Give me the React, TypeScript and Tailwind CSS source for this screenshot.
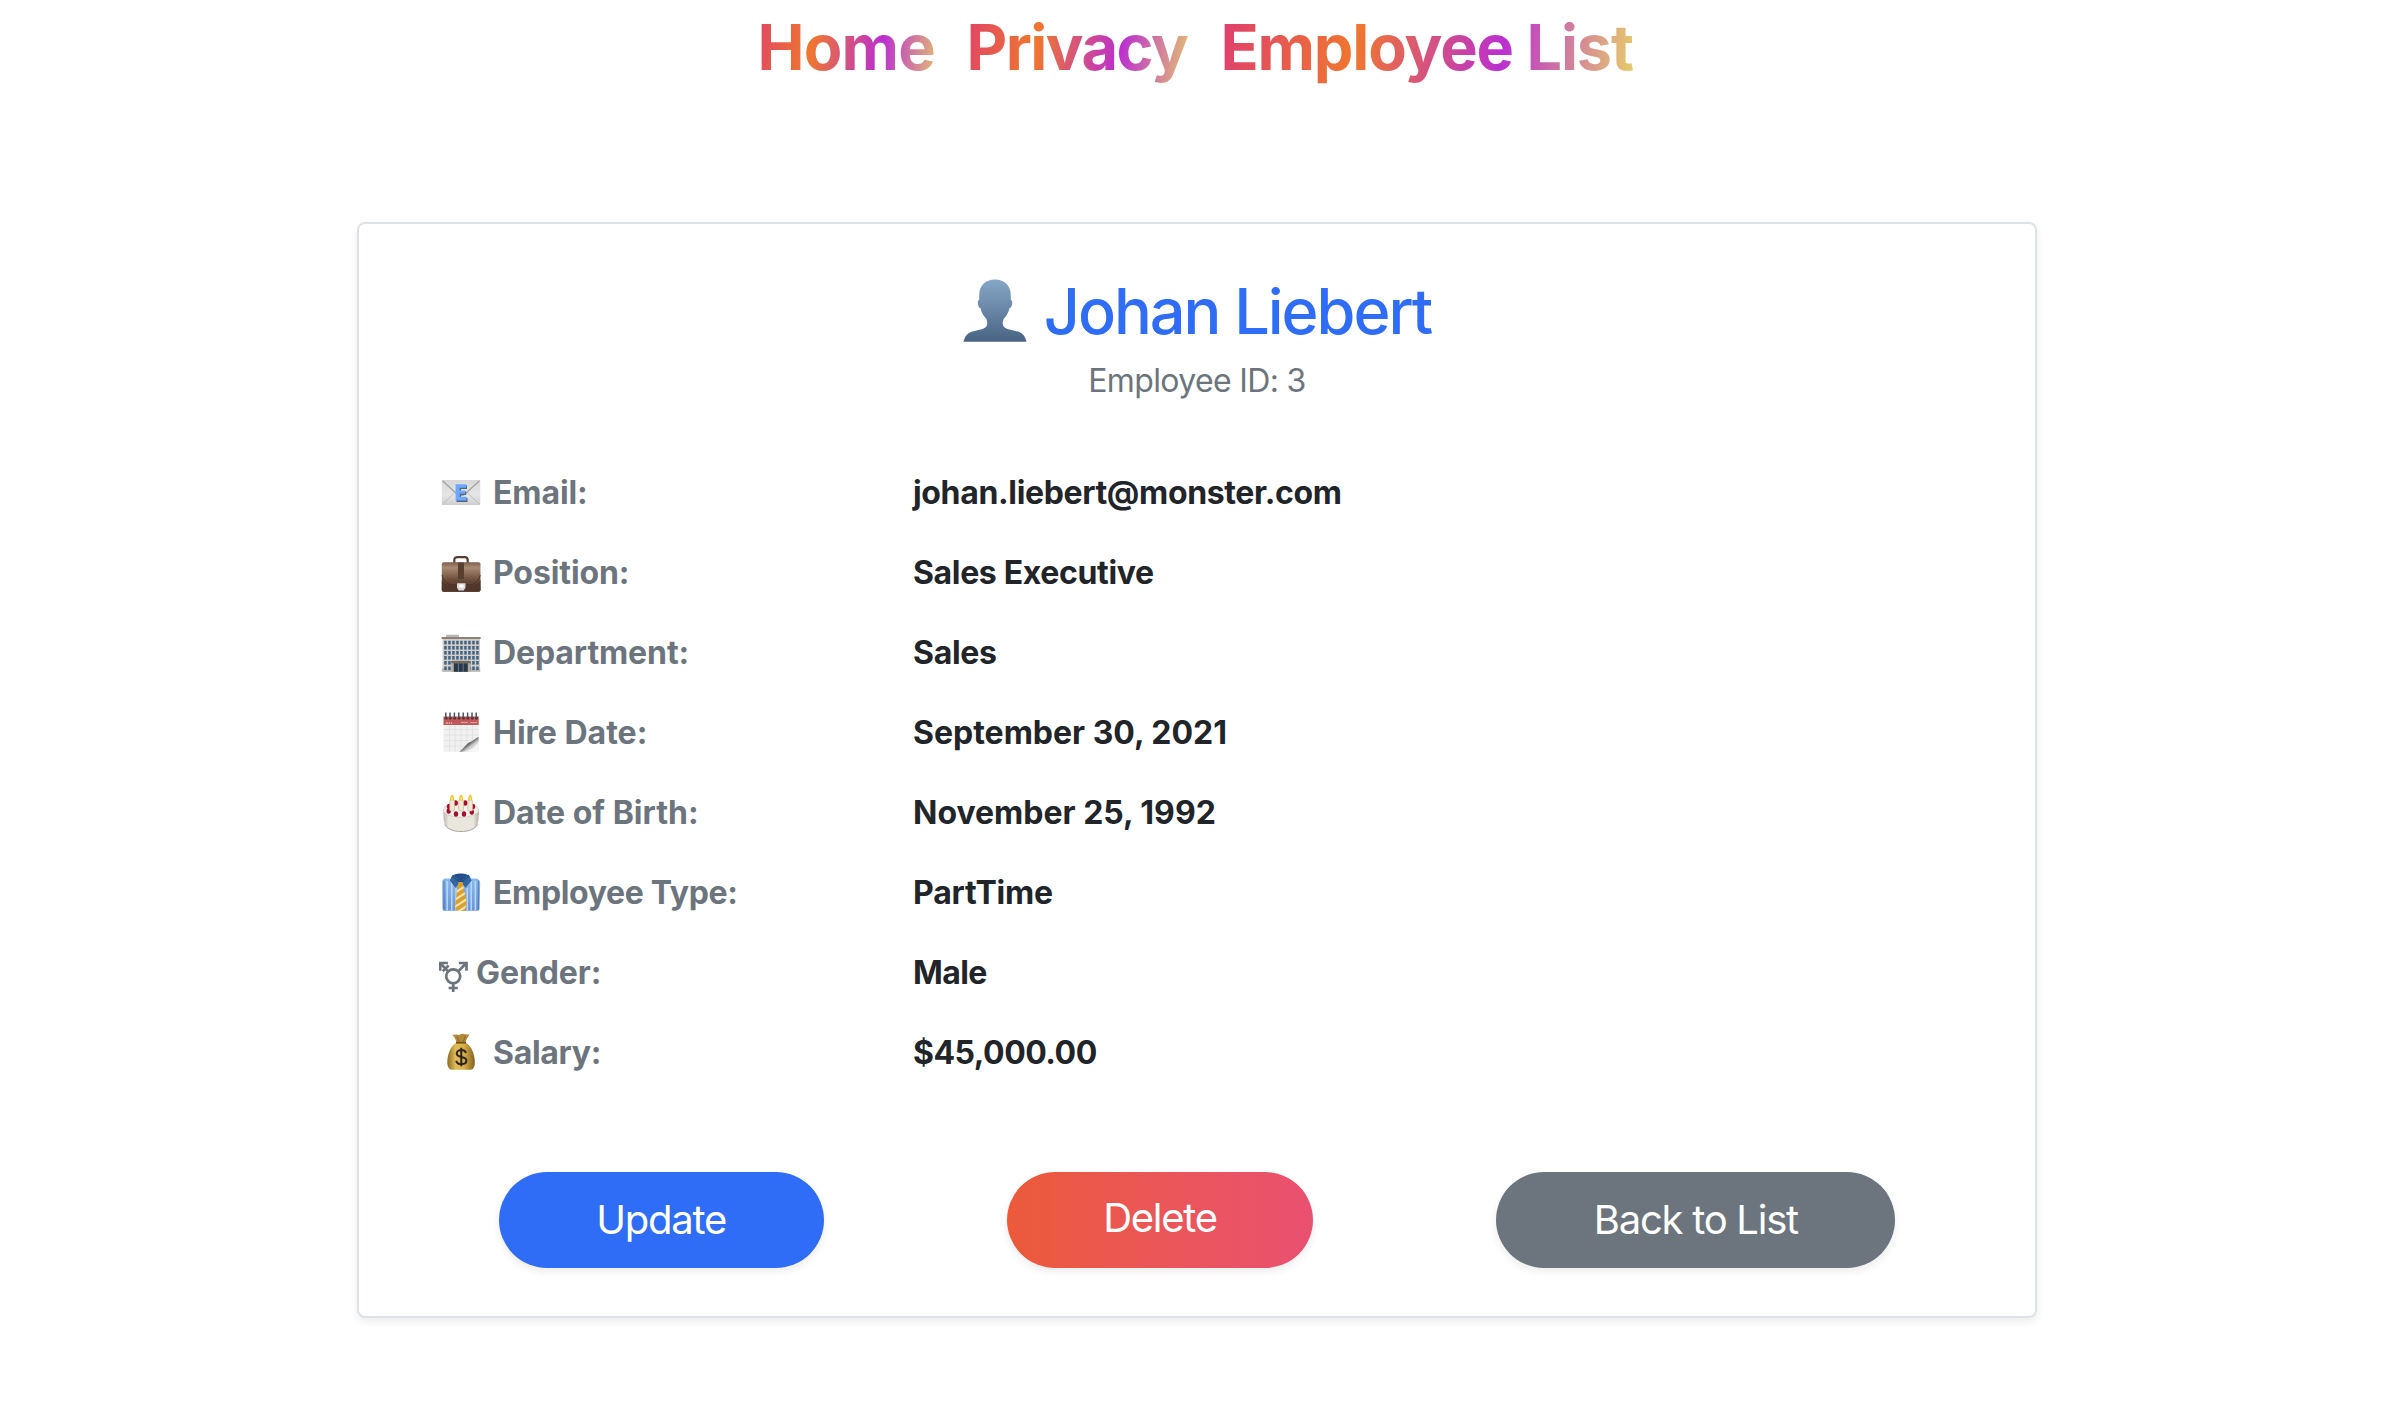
import type { ReactNode } from "react";

const svgBox = "block h-10 w-10 shrink-0 overflow-visible";

function PersonIcon() {
  return (
    <svg viewBox="0 0 64 63" className="relative -top-px block h-[63px] w-16 shrink-0">
      <defs>
        <linearGradient id="person" x1="0" y1="0" x2="0" y2="1">
          <stop offset="0" stopColor="#86a7c6" />
          <stop offset="0.5" stopColor="#6885a6" />
          <stop offset="1" stopColor="#496482" />
        </linearGradient>
      </defs>
      <path
        d="M32 .5C22 .5 16.200 7 16.200 16.500V21c-1.600.5-1.700 3-1 5.300.5 1.700 1.200 2.700 2.300 3 1 4.700 3.300 8 5.800 10.500 1.200 2.700 1.200 5 .4 7.200-1.500 2.600-4.700 3.200-9.200 4.300C6.500 53 2.500 54.500.5 62.700h63c-2-8.200-6-9.700-14-11.400-4.500-1.100-7.700-1.700-9.200-4.300-.8-2.200-.8-4.500.4-7.200 2.500-2.500 4.800-5.800 5.800-10.500 1.100-.3 1.800-1.300 2.300-3 .7-2.300.6-4.800-1-5.300v-4.500C47.800 7 42 .5 32 .5Z"
        fill="url(#person)"
      />
    </svg>
  );
}

function EmailIcon() {
  return (
    <svg viewBox="0 0 40 40" className={svgBox}>
      <defs>
        <linearGradient id="mail" x1="0" y1="0" x2="0" y2="1">
          <stop offset="0" stopColor="#d8d8d8" />
          <stop offset="0.6" stopColor="#e6e6e6" />
          <stop offset="1" stopColor="#cecece" />
        </linearGradient>
      </defs>
      <rect x="0.800" y="8" width="38.500" height="25" rx="0.800" fill="url(#mail)" />
      <path d="M1 32.600 14.500 20M39 32.600 25.500 20" stroke="#bdbdbd" strokeWidth="0.900" />
      <path d="M1.500 8.800 16 22c2.500 2 5.500 2 8 0L38.500 8.800" fill="none" stroke="#a3a3a3" strokeWidth="1.300" />
      <path d="M15.500 13.300h10.500v3.600h-6v2.600h5.200v3.400h-5.200v3h6.500v4H15.500Z" fill="#51647f" />
      <path d="M14.600 12.200h10.600v3.600h-6.500v2.600h5.500v3.400h-5.500v3h6.800v3.800H14.600Z" fill="#6ea8fb" />
    </svg>
  );
}

function BriefcaseIcon() {
  return (
    <svg viewBox="0 0 40 40" className={svgBox}>
      <defs>
        <linearGradient id="case" x1="0" y1="0" x2="0" y2="1">
          <stop offset="0" stopColor="#7d5f4c" />
          <stop offset="0.18" stopColor="#a68a72" />
          <stop offset="0.6" stopColor="#6b4c3b" />
          <stop offset="1" stopColor="#4a3026" />
        </linearGradient>
      </defs>
      <path d="M13.300 11V7.800c0-1.700 1.400-2.700 3-2.700h7.400c1.600 0 3 1 3 2.700V11" fill="none" stroke="#5a3d2f" strokeWidth="2.200" />
      <rect x="0.800" y="10.300" width="38.700" height="29.500" rx="2" fill="url(#case)" />
      <path d="M.8 28v10a1.800 1.800 0 0 0 1.800 1.800h35a1.800 1.800 0 0 0 1.900-1.800V28c-3 5-8 6-12.500 6H13.500C8 34 3.500 32.500.8 28Z" fill="#51362a" />
      <path d="M1 23c2 8 7 10 12.500 10H27c5.500 0 10.500-2.500 12.300-10" fill="none" stroke="#3d261d" strokeWidth="0.700" />
      <rect x="17" y="10.500" width="6" height="16.500" fill="#58402f" />
      <path d="M16 31.300h8.500v4.200l-1.700 3h-5.100l-1.700-3Z" fill="#dcdad8" />
      <path d="M18 32.500h4.500v3H18Z" fill="#fff" />
    </svg>
  );
}

function BuildingIcon() {
  const columns = [3.2, 7.200, 11.200, 15.200, 19.200, 23.200, 27.200, 31.200, 35.200];
  const rows = [8.800, 14, 19, 24, 29, 34.500];
  return (
    <svg viewBox="0 0 40 40" className={svgBox}>
      <rect x="5" y="2.700" width="13" height="3" fill="#b9b5b0" />
      <rect x="1.500" y="6" width="37.500" height="33.800" fill="#d3cdc3" />
      <rect x="0.600" y="5" width="39" height="2" fill="#8b8178" />
      <rect x="0.800" y="36.500" width="38.500" height="3.300" fill="#b7b3ad" fillOpacity="0.700" />
      {rows.map((y) =>
        columns.map((x) => <rect key={`${x}-${y}`} x={x} y={y} width="2.500" height="3.600" fill="#3d6388" />),
      )}
      <rect x="10.300" y="29.500" width="19" height="10.300" fill="#b4aca3" />
      <rect x="10.300" y="28.800" width="19" height="2.500" fill="#75695f" />
      <rect x="12.800" y="31.300" width="14" height="8.500" fill="#26384a" />
      <path d="M17.400 31.300v8.500M22.200 31.300v8.500" stroke="#8797a5" strokeWidth="0.700" />
    </svg>
  );
}

function CalendarIcon() {
  return (
    <svg viewBox="0 0 40 40" className={svgBox}>
      <defs>
        <linearGradient id="curl" x1="0" y1="0" x2="1" y2="1">
          <stop offset="0.250" stopColor="#f4f4f4" />
          <stop offset="0.450" stopColor="#555" />
          <stop offset="0.620" stopColor="#cfcfcf" />
          <stop offset="1" stopColor="#fff" />
        </linearGradient>
      </defs>
      <rect x="2.500" y="4" width="35.200" height="35.800" rx="0.800" fill="#f0f0f0" />
      <path d="M3 17.500h34.500M3 23h34.500M3 28.500h34.500M3 34h34.500M8.500 13v26.500M14.200 13v26.500M20 13v26.500M25.800 13v26.500M31.500 13v26.500" stroke="#e0e0e0" strokeWidth="0.800" />
      <path d="M2.500 4.500h35.200V13H2.500Z" fill="#c05a58" />
      <path d="M5 12l1-2 1 2m1.500 0v-2m2 0v2M20 10.500h7M29 10.500h7" fill="none" stroke="#e5aaa8" strokeWidth="0.900" />
      <path d="M37.700 25c-4 1.500-5 4-10 5.800-2 .8-4 5-9.500 9h19.500Z" fill="url(#curl)" />
      <path d="M37.700 30c-4 6-8 8-14 9.800h14Z" fill="#f6f6f6" />
      {[4.800, 9, 13.400, 17.800, 22.200, 26.600, 31, 35.200].map((x) => (
        <g key={x}>
          <circle cx={x + 0.300} cy="6.200" r="1.400" fill="#54292c" />
          <path d={`M${x} .5v5.700`} stroke="#4c535e" strokeWidth="1.500" />
        </g>
      ))}
    </svg>
  );
}

function CakeIcon() {
  const cherries: [number, number][] = [
    [8, 14.500], [14.700, 11], [24.300, 11], [32, 14.500], [7.700, 19], [15, 22], [23, 22], [30.800, 20],
  ];
  return (
    <svg viewBox="0 0 40 40" className={svgBox}>
      <defs>
        <linearGradient id="cake" x1="0" y1="0" x2="1" y2="0">
          <stop offset="0" stopColor="#bdb9ae" />
          <stop offset="0.150" stopColor="#e9e6de" />
          <stop offset="0.850" stopColor="#e9e6de" />
          <stop offset="1" stopColor="#b3afa3" />
        </linearGradient>
      </defs>
      <path d="M2.300 18c0 5-.1 10 1.500 14.500C6.500 37.500 13 39.700 20 39.700s13.800-2.200 16.500-7.200C37.900 28 37.800 23 37.800 18Z" fill="url(#cake)" />
      <path d="M3.800 32.500C6.500 37.500 13 39.500 20 39.500s13.800-2 16.500-7" fill="none" stroke="#a19d8f" strokeWidth="0.900" />
      <ellipse cx="20" cy="18" rx="17.700" ry="7.300" fill="#f3f1ea" stroke="#c5c1b5" strokeWidth="0.700" />
      {cherries.map(([x, y]) => (
        <ellipse key={`${x}-${y}`} cx={x} cy={y} rx="2.200" ry="2.700" fill="#a80d30" />
      ))}
      {[8.700, 17.700, 26.800].map((x) => (
        <g key={x}>
          <rect x={x} y="8" width="4.800" height="11" rx="1.300" fill="#efe9d2" stroke="#bbb497" strokeWidth="0.600" />
          <path d={`M${x + 2.400} 2.300c2.800 3 3 6.500 0 6.500s-2.800-3.500 0-6.500Z`} fill="#efc534" />
          <path d={`M${x + 2.400} 5v3.500`} stroke="#fff0a0" strokeWidth="1" />
        </g>
      ))}
    </svg>
  );
}

function ShirtIcon() {
  return (
    <svg viewBox="0 0 40 40" className={svgBox}>
      <defs>
        <clipPath id="tie">
          <path d="M17.500 10h4l1 4.500 3 15.500-1.500 9h-8l-2-4L16.700 14.500Z" />
        </clipPath>
        <linearGradient id="shirt" x1="0" y1="0" x2="0" y2="1">
          <stop offset="0" stopColor="#8bb9ec" />
          <stop offset="1" stopColor="#6996d6" />
        </linearGradient>
      </defs>
      <path d="M4 6.500h31c3 .4 4 2 4.200 4.500L38.500 37c0 1-.8 1.800-2 1.800h-33c-1.300 0-2-.8-2-1.800L1.200 11C1.200 8.500 2 7 4 6.500Z" fill="url(#shirt)" />
      <path d="M6.200 9v29.500M10.800 9v29.500M15 16v22.500M26.200 16v22.500M30.200 9v29.500M34.400 9v29.500" stroke="#b9d7f8" strokeWidth="1.500" />
      <path d="M3 8.500v29M37.300 8.500v29" stroke="#3f6eae" strokeWidth="0.800" />
      <path d="M10 5.500C13 0 26.500 0 29.500 5.500L20 12Z" fill="#244f8c" />
      <path d="M12 2.500 8.800 8.500l5.700 7.300 5.200-6ZM27.500 2.500l3.200 6-6.200 7.300-4.800-6Z" fill="#34669f" />
      <path d="M12 3.500c1 3 4 5 7.700 6.500 3.800-1.500 6.500-3.500 7.800-6.500" fill="none" stroke="#173d70" strokeWidth="0.800" />
      <g clipPath="url(#tie)">
        <rect x="12" y="8" width="16" height="32" fill="#d9a02f" />
        <path d="m12 22 14-9M12 29l14-9M12 36l14-9M12 43l14-9" stroke="#f7e3a6" strokeWidth="2.200" />
      </g>
    </svg>
  );
}

function GenderIcon() {
  return (
    <svg viewBox="0 0 29 40" className="-ml-0.5 block h-10 w-[29px] shrink-0" fill="none" stroke="#6c757d" strokeWidth="2.700">
      <circle cx="14.200" cy="24.300" r="7" />
      <path d="M14.200 31.600V40M9.600 36h9.200M19.300 19.400 26.600 11.800M19.800 11h7.700v7.700M9.100 19.400 1.800 11.800M1.200 18.700V11h7.700M3.700 19.200 9.600 13.600" />
    </svg>
  );
}

function MoneyIcon() {
  return (
    <svg viewBox="0 0 40 40" className={svgBox}>
      <defs>
        <linearGradient id="bag" x1="0" y1="0" x2="1" y2="0">
          <stop offset="0" stopColor="#8a6a22" />
          <stop offset="0.300" stopColor="#e0bd58" />
          <stop offset="0.600" stopColor="#d8b14b" />
          <stop offset="1" stopColor="#82611f" />
        </linearGradient>
      </defs>
      <path d="M11 2.500c2 1 3.500-.5 5.500.3 2 .7 4-1.500 6-.8 1.800.6 4 .2 6 .5-1.500 2-3.500 5-4 8.500h-9C15 7 13 4.500 11 2.500Z" fill="#b48b3a" />
      <path d="M15.500 10.500h9c6 3.500 9.500 12 9.300 20.500-.1 4-1.500 6.500-4 6.700H10.500C8 37.500 6.500 35 6.300 31c-.2-8.500 3.200-17 9.200-20.500Z" fill="url(#bag)" />
      <path d="M15 10.700h10" stroke="#71501a" strokeWidth="1.800" />
      <path d="M16 4l2 5.500M24.500 4l-2.300 5.500" stroke="#80602a" strokeWidth="0.800" />
      <path d="M25 20.800c-.7-1.800-2.200-2.700-4.600-2.700-2.800 0-4.700 1.200-4.700 3.400 0 5 9.700 2 9.700 7 0 2.300-2 3.600-5 3.600-2.800 0-4.700-1.200-5.200-3.400M20.300 15.700v18.500" fill="none" stroke="#2d2419" strokeWidth="2" />
    </svg>
  );
}

const navItems = [
  { label: "Home", size: "w-[209px] tracking-[-0.8px]" },
  { label: "Privacy", size: "w-[254px] tracking-[-1.55px]" },
  { label: "Employee List", size: "w-[448px] tracking-[-1.2px]" },
];

type Row = {
  icon: ReactNode;
  label: string;
  value: string;
  labelGap?: string;
  labelTracking?: string;
  valueTracking?: string;
};

const rows: Row[] = [
  { icon: <EmailIcon />, label: "Email:", value: "johan.liebert@monster.com", valueTracking: "tracking-[-0.35px]" },
  { icon: <BriefcaseIcon />, label: "Position:", value: "Sales Executive", valueTracking: "tracking-[-0.35px]" },
  { icon: <BuildingIcon />, label: "Department:", value: "Sales", valueTracking: "tracking-[-0.3px]" },
  { icon: <CalendarIcon />, label: "Hire Date:", value: "September 30, 2021", labelTracking: "tracking-normal", valueTracking: "tracking-normal" },
  { icon: <CakeIcon />, label: "Date of Birth:", value: "November 25, 1992", labelTracking: "tracking-normal", valueTracking: "tracking-normal" },
  { icon: <ShirtIcon />, label: "Employee Type:", value: "PartTime", labelTracking: "tracking-[-0.35px]", valueTracking: "tracking-[-0.2px]" },
  { icon: <GenderIcon />, label: "Gender:", value: "Male", labelGap: "gap-2", valueTracking: "tracking-[-0.6px]" },
  { icon: <MoneyIcon />, label: "Salary:", value: "$45,000.00", labelTracking: "tracking-[-0.3px]", valueTracking: "tracking-[-0.5px]" },
];

const button =
  "flex h-24 items-center justify-center rounded-full text-[40px] leading-[60px] font-normal tracking-[-1.25px] text-white shadow-[0_4px_8px_rgba(0,0,0,0.075)]";

export default function App() {
  return (
    <div className="flex min-h-[1406px] flex-col items-center bg-white pl-2.5 font-['Inter',sans-serif] text-[#212529]">
      <nav className="flex h-24 items-start">
        {navItems.map((item) => (
          <a
            key={item.label}
            href="#"
            className={`block bg-[linear-gradient(98deg,#dd3b72_2%,#f0772e_34%,#bb2fd0_66%,#ebdc5f_98%)] bg-clip-text px-4 text-[63px] leading-[94px] font-bold whitespace-nowrap text-transparent ${item.size}`}
          >
            {item.label}
          </a>
        ))}
      </nav>

      <main className="mt-[126px] h-[1096px] w-[1680px] rounded-lg border-2 border-[#dee2e6] bg-white px-12 pt-[49px] shadow-[0_4px_8px_rgba(0,0,0,0.075)]">
        <header className="flex flex-col items-center">
          <h2 className="flex items-center gap-[17px] text-[63px] leading-[76px] font-medium tracking-[-2.05px] whitespace-nowrap text-[#2f6df6]">
            <PersonIcon />
            Johan Liebert
          </h2>
          <p className="mt-2 text-[32px] leading-[48px] tracking-[-0.65px] text-[#6c757d]">Employee ID: 3</p>
        </header>

        <dl className="mt-[63px] flex flex-col gap-8 pl-[34px] text-[32px] leading-[48px] font-bold">
          {rows.map((row) => (
            <div key={row.label} className="grid grid-cols-[472px_1fr]">
              <dt className={`flex items-center text-[#6c757d] ${row.labelGap ?? "gap-3"}`}>
                {row.icon}
                <span className={`pt-0.5 leading-[46px] ${row.labelTracking ?? "tracking-[-0.1px]"}`}>{row.label}</span>
              </dt>
              <dd className={`pt-0.5 leading-[46px] ${row.valueTracking ?? "tracking-normal"}`}>{row.value}</dd>
            </div>
          ))}
        </dl>

        <div className="mt-24 flex justify-around">
          <button className={`${button} w-[325px] bg-[#2f6df6]`}>Update</button>
          <button className={`${button} w-[306px] bg-linear-to-r from-[#ec5a39] to-[#ea5070] pb-1`}>Delete</button>
          <button className={`${button} w-[399px] bg-[#6c757d]`}>Back to List</button>
        </div>
      </main>
    </div>
  );
}
